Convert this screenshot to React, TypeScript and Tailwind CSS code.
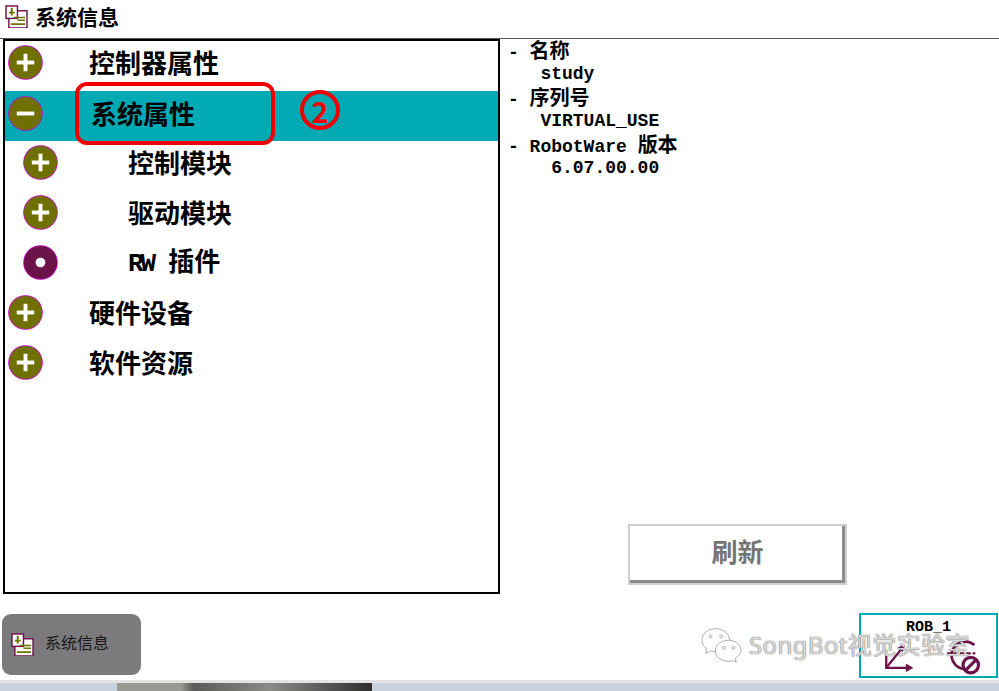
import type { ReactNode } from "react";

const cjk = "font-['Noto_Sans_CJK_SC','Liberation_Sans',sans-serif]";

function Node({ kind }: { kind: "plus" | "minus" | "dot" }) {
  const fill = kind === "dot" ? "#6b1349" : "#6f7000";
  return (
    <svg width="35" height="35" viewBox="0 0 36 36" className="shrink-0">
      <circle cx="18" cy="18" r="17.8" fill="#c800c8" />
      <circle cx="18" cy="18" r="17" fill={fill} />
      {kind === "dot" && <circle cx="18" cy="18" r="5" fill="#fff" />}
      {kind !== "dot" && <rect x="9" y="16" width="18" height="4" fill="#fff" />}
      {kind === "plus" && <rect x="16" y="9" width="4" height="18" fill="#fff" />}
    </svg>
  );
}

function SysIcon({ size }: { size: number }) {
  return (
    <svg width={size} height={size * 1.04} viewBox="0 0 24 25" className="shrink-0">
      <rect x="4" y="6" width="19" height="18" fill="#fff" stroke="#6b1349" strokeWidth="1.5" />
      <rect x="1" y="1" width="12" height="13" fill="#fff" stroke="#6b1349" strokeWidth="1.5" />
      <path d="M7 3v8M4 8h6" stroke="#6f7000" strokeWidth="2" />
      <path d="M9 13h12M13 16h8M6 20h15" stroke="#6f7000" strokeWidth="1.6" />
    </svg>
  );
}

function Row({ kind, label, level, active, textX }: { kind: "plus" | "minus" | "dot"; label: ReactNode; level: 0 | 1; active?: boolean; textX?: string }) {
  return (
    <div className={`flex h-[50px] items-center ${level === 1 ? "pl-[18px]" : "pl-[3px]"} ${active ? "bg-[#00aab4] pb-[6px]" : "pb-[8px]"}`}>
      <Node kind={kind} />
      <span className={`${textX ?? (level === 1 ? "ml-[70px]" : "ml-[46px]")} ${cjk} text-[26px] font-bold leading-none text-black whitespace-pre`}>{label}</span>
    </div>
  );
}

function Cn({ children }: { children: ReactNode }) {
  return <span className={`${cjk} text-[20px] leading-none`}>{children}</span>;
}

const info: ReactNode[] = [
  <>- <Cn>名称</Cn></>,
  "   study",
  <>- <Cn>序列号</Cn></>,
  "   VIRTUAL_USE",
  <>- RobotWare <Cn>版本</Cn></>,
  "    6.07.00.00",
];

export default function App() {
  return (
    <div className="relative flex h-[691px] w-[999px] flex-col overflow-hidden bg-white">
      <header className="flex h-[39px] shrink-0 items-center gap-[7px] border-b border-[#555] pb-[5px] pl-[5px]">
        <SysIcon size={23} />
        <span className={`${cjk} text-[21px] font-bold leading-none text-black`}>系统信息</span>
      </header>

      <main className="flex h-[555px] shrink-0">
        <div className="ml-[3px] flex w-[497px] flex-col border-2 border-black">
          <Row kind="plus" label="控制器属性" level={0} />
          <Row kind="minus" label="系统属性" level={0} active textX="ml-[48px]" />
          <Row kind="plus" label="控制模块" level={1} />
          <Row kind="plus" label="驱动模块" level={1} />
          <Row
            kind="dot"
            label={
              <>
                <span className="font-['Liberation_Mono',monospace] text-[26px] tracking-[-3px]">RW</span>
                <span className="ml-[15px]">插件</span>
              </>
            }
            level={1}
          />
          <Row kind="plus" label="硬件设备" level={0} />
          <Row kind="plus" label="软件资源" level={0} />
        </div>
        <div className="flex flex-1 flex-col">
          <div className="pl-[8px] pt-[1px]">
            {info.map((line, i) => (
              <div key={i} className="h-[23.4px] whitespace-pre font-['Liberation_Mono','Noto_Sans_CJK_SC',monospace] text-[18px] font-bold leading-[23.4px] text-black">
                {line}
              </div>
            ))}
          </div>
          <div className="mb-[9px] ml-[128px] mt-auto flex h-[61px] w-[219px] items-center justify-center border-2 border-[#cfcfcf] bg-white pb-[8px] shadow-[inset_-3px_-3px_0_#8c8c8c]">
            <span className={`${cjk} text-[26px] font-bold leading-none text-[#757575]`}>刷新</span>
          </div>
        </div>
      </main>

      <footer className="flex h-[86px] shrink-0 items-start justify-between pl-[2px] pr-[1px] pt-[20px]">
        <div className="flex h-[61px] w-[139px] items-center gap-[11px] rounded-[9px] bg-[#7d7a7d] pl-[9px]">
          <SysIcon size={23} />
          <span className={`${cjk} -mt-[5px] text-[16px] leading-none text-[#181818]`}>系统信息</span>
        </div>
        <div className="-mt-[1px] flex h-[65px] w-[139px] flex-col items-center border-2 border-[#00aab4] bg-white">
          <span className="mt-[5px] font-['Liberation_Mono',monospace] text-[15px] font-bold leading-[16px] text-black">ROB_1</span>
          <svg width="135" height="44" viewBox="0 0 135 44" className="mt-auto">
            <g stroke="#6b1349" fill="none">
              <path d="M21 21v14h24" strokeWidth="2.5" />
              <path d="M21 35 38 14" strokeWidth="2.5" />
              <path d="M43 31l7 4-7 4z" fill="#6b1349" />
              <path d="M34 13l7-3-2 7z" fill="#6b1349" />
              <path d="M118 10a15 15 0 1 0-8 26" strokeWidth="3" />
              <path d="M88 19h31" strokeWidth="2.5" strokeDasharray="5 2" />
              <circle cx="114" cy="32" r="8.5" strokeWidth="3.5" fill="#fff" />
              <path d="M108 38l12-12" strokeWidth="3.5" />
            </g>
          </svg>
        </div>
      </footer>

      <div className="flex h-[11px] shrink-0 flex-col">
        <div className="h-[3px] bg-[#e4e4e4]" />
        <div className="flex h-[8px] bg-[#c8d2dc]">
          <div className="ml-[117px] w-[255px] bg-[linear-gradient(90deg,#9a9a94_0%,#9a9a94_25%,#5a5a58_30%,#8a8a86_60%,#2e2e2e_100%)]" />
        </div>
      </div>

      {/* red annotation */}
      <div className="absolute left-[75px] top-[82px] h-[63px] w-[200px] rounded-[12px] border-[4px] border-[#f00000]" />
      <div className={`absolute left-[300px] top-[90px] flex h-[40px] w-[40px] items-center justify-center rounded-full border-[4px] border-[#f00000] ${cjk} text-[29px] font-bold leading-none text-[#f00000]`}>2</div>

      {/* watermark */}
      <div className="absolute left-[701px] top-[627px] flex items-center gap-[6px]">
        <svg width="42" height="36" viewBox="0 0 44 36" fill="#fff" stroke="#a8a8a8" strokeWidth="1">
          <path d="M15 1C7 1 1 6 1 13c0 4 2 7 5 9l-1 5 5-3c1 0 3 1 5 1 8 0 15-5 15-12S23 1 15 1z" />
          <path d="M29 13c-8 0-14 5-14 11s6 11 14 11c2 0 3 0 4-1l4 2-1-4c3-2 6-5 6-8 0-6-6-11-13-11z" />
          <circle cx="10" cy="9" r="1.5" />
          <circle cx="21" cy="9" r="1.5" />
          <circle cx="24" cy="21" r="1.5" />
          <circle cx="34" cy="21" r="1.5" />
        </svg>
        <span className="whitespace-pre font-['Noto_Sans','Noto_Sans_CJK_SC',sans-serif] text-[24px] leading-none tracking-[0.4px] text-white/75 [text-shadow:0_0_1px_#666,0_0_1px_#666]">SongBot视觉实验室</span>
      </div>
    </div>
  );
}
